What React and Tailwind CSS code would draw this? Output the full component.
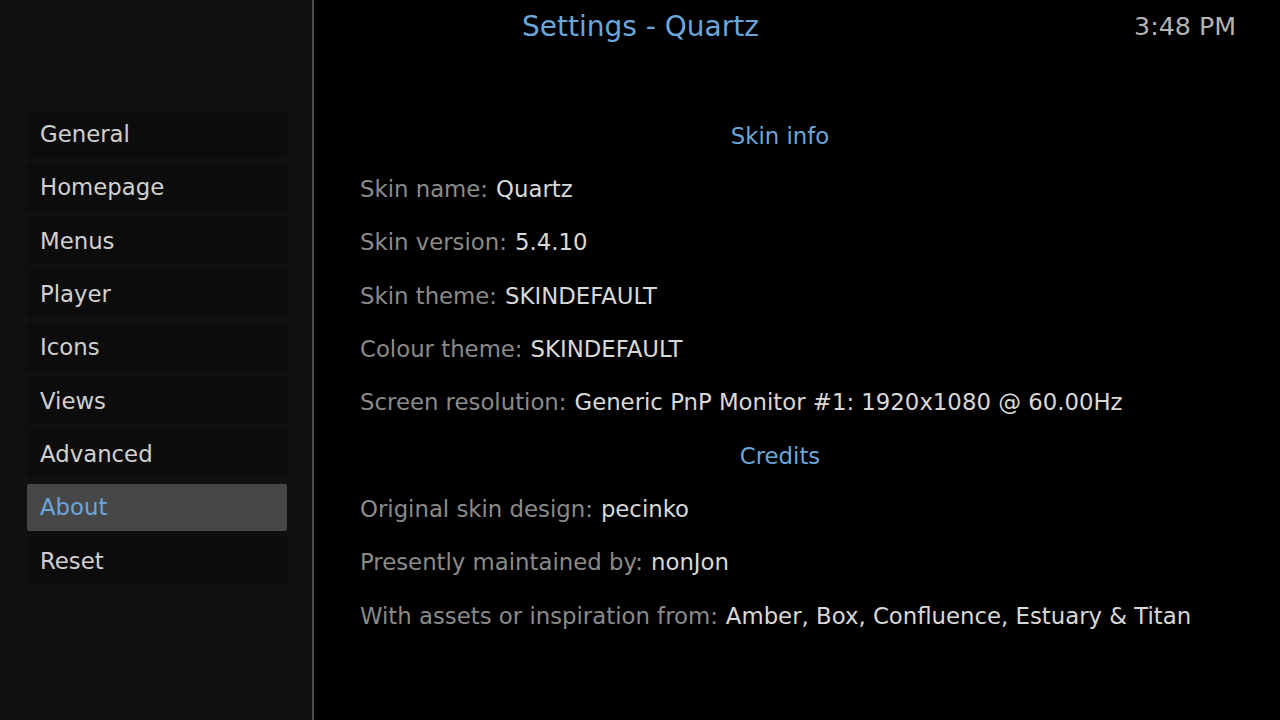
export default function App() {
  const menu = ["General", "Homepage", "Menus", "Player", "Icons", "Views", "Advanced", "About", "Reset"];
  const rows = [
    { h: "Skin info" },
    { l: "Skin name:", v: "Quartz" },
    { l: "Skin version:", v: "5.4.10" },
    { l: "Skin theme:", v: "SKINDEFAULT" },
    { l: "Colour theme:", v: "SKINDEFAULT" },
    { l: "Screen resolution:", v: "Generic PnP Monitor #1: 1920x1080 @ 60.00Hz" },
    { h: "Credits" },
    { l: "Original skin design:", v: "pecinko" },
    { l: "Presently maintained by:", v: "nonJon" },
    { l: "With assets or inspiration from:", v: "Amber, Box, Confluence, Estuary & Titan" },
  ];
  return (
    <div className="flex w-[1280px] h-[720px] bg-black overflow-hidden" style={{ fontFamily: '"DejaVu Sans", sans-serif' }}>
      <div className="w-[314px] h-full bg-[#101010] border-r-2 border-[#4a4a4a] shrink-0 pt-[110.5px] pl-[27px]">
        <div className="flex flex-col gap-[6.33px] w-[260px]">
          {menu.map((m) => (
            <div
              key={m}
              className={
                "h-[47px] flex items-center pl-[13px] text-[22.8px] rounded-[2px] " +
                (m === "About" ? "bg-[#474747] text-[#6aa6d9]" : "bg-[#0c0c0c] text-[#d0d0d0]")
              }
            >
              {m}
            </div>
          ))}
        </div>
      </div>
      <div className="flex-1 flex flex-col">
        <div className="h-[53px] flex items-center">
          <div className="ml-[208px] text-[28px] text-[#6aa6d9]">Settings - Quartz</div>
          <div className="ml-auto mr-[44px] text-[25.3px] text-[#b3b3b3]">3:48 PM</div>
        </div>
        <div className="pt-[56px] pl-[46px] pr-[80px] flex flex-col">
          {rows.map((r, i) =>
            r.h ? (
              <div key={i} className="h-[53.33px] flex items-center justify-center text-[22.8px] text-[#6aa6d9]">
                {r.h}
              </div>
            ) : (
              <div key={i} className="h-[53.33px] flex items-center text-[22.8px] whitespace-nowrap">
                <span className="text-[#8a8a8a]">{r.l}</span>
                <span className="text-[#d8d8d8] ml-[8px]">{r.v}</span>
              </div>
            )
          )}
        </div>
      </div>
    </div>
  );
}
